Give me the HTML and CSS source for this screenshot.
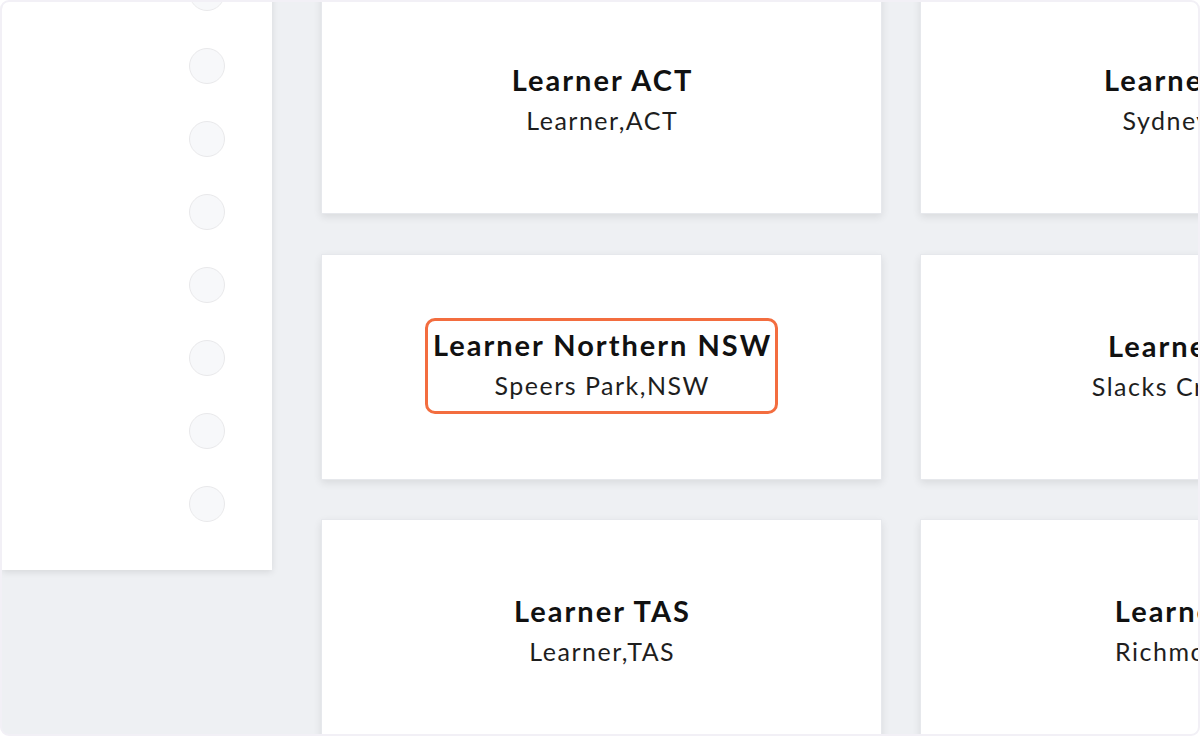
FILE: index.html
```html
<!DOCTYPE html>
<html lang="en">
<head>
<meta charset="utf-8">
<title>Learner locations</title>
<link rel="stylesheet" href="styles.css">
</head>
<body>
<div class="frame">
  <div class="page">
    <aside class="panel">
      <ul class="options">
        <li class="radio"></li>
        <li class="radio"></li>
        <li class="radio"></li>
        <li class="radio"></li>
        <li class="radio"></li>
        <li class="radio"></li>
        <li class="radio"></li>
        <li class="radio"></li>
      </ul>
    </aside>
    <main class="grid">
      <div class="card">
        <div class="title">Learner ACT</div>
        <div class="sub">Learner,ACT</div>
      </div>
      <div class="card">
        <div class="title">Learner NSW</div>
        <div class="sub">Sydney,NSW</div>
      </div>
      <div class="card">
        <div class="highlight">
          <div class="title">Learner Northern NSW</div>
          <div class="sub">Speers Park,NSW</div>
        </div>
      </div>
      <div class="card">
        <div class="title">Learner QLD</div>
        <div class="sub">Slacks Creek,QLD</div>
      </div>
      <div class="card">
        <div class="title">Learner TAS</div>
        <div class="sub">Learner,TAS</div>
      </div>
      <div class="card">
        <div class="title">Learner VIC</div>
        <div class="sub">Richmond,VIC</div>
      </div>
    </main>
  </div>
</div>
</body>
</html>
```
FILE: styles.css
```css
* { box-sizing: border-box; }
html, body { margin: 0; padding: 0; }
body {
  width: 1200px;
  height: 736px;
  overflow: hidden;
  background: #ffffff;
  font-family: Lato, "Noto Sans", sans-serif;
}
.frame {
  width: 1200px;
  height: 736px;
  border: 2px solid #f2f0f6;
  border-radius: 9px;
  overflow: hidden;
  background: #eef0f3;
}
.page {
  display: flex;
  align-items: flex-start;
  margin-top: -27px;
}
.panel {
  width: 270px;
  height: 595px;
  flex: none;
  background: #ffffff;
  box-shadow: 0 2px 7px rgba(0, 0, 0, 0.10);
  padding: 0 47px 0 0;
  display: flex;
  justify-content: flex-end;
}
.options {
  list-style: none;
  margin: 0;
  padding: 0;
  display: flex;
  flex-direction: column;
  gap: 37px;
}
.radio {
  width: 36px;
  height: 36px;
  border-radius: 50%;
  background: #f7f8fa;
  border: 1px solid #e9e9eb;
}
.grid {
  margin-left: 49px;
  margin-top: 13px;
  display: grid;
  grid-template-columns: 561px 561px;
  grid-auto-rows: 226px;
  column-gap: 38px;
  row-gap: 39.5px;
  flex: none;
}
.card {
  background: #ffffff;
  border: 1px solid #e6e8ec;
  box-shadow: 0 3px 8px rgba(0, 0, 0, 0.09);
  display: flex;
  flex-direction: column;
  align-items: center;
  justify-content: center;
  text-align: center;
  white-space: nowrap;
  padding-bottom: 2px;
}
.title {
  font-size: 29px;
  font-weight: 700;
  line-height: 40px;
  letter-spacing: 2px;
  text-indent: 2px;
  color: #111111;
}
.sub {
  font-size: 25px;
  font-weight: 400;
  line-height: 40px;
  letter-spacing: 1.5px;
  text-indent: 1.5px;
  color: #1e1e1e;
}
.highlight {
  border: 3px solid #f36d3f;
  border-radius: 10px;
  padding: 4px 3px 6px;
}
```
